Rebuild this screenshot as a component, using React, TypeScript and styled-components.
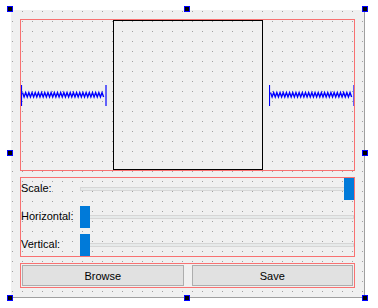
import React from "react";
import styled, { createGlobalStyle } from "styled-components";

const GlobalStyle = createGlobalStyle`
  html, body {
    margin: 0;
    padding: 0;
    background: #ffffff;
  }
  body {
    font-family: "Liberation Sans", Arial, sans-serif;
    font-size: 11px;
    color: #000000;
  }
`;

const Canvas = styled.div`
  position: relative;
  width: 378px;
  height: 308px;
  padding: 10px 0 0 11px;
  box-sizing: border-box;
`;

const Form = styled.div`
  width: 354px;
  height: 288px;
  box-sizing: border-box;
  background-color: #f0f0f0;
  background-image: conic-gradient(at 1px 1px, transparent 75%, #a0a0a0 0);
  background-size: 10px 10px;
  background-position: 1px 1px;
  border-right: 1px solid #a0a0a0;
  border-bottom: 1px solid #a0a0a0;
  padding: 9px;
  display: flex;
  flex-direction: column;
  gap: 6px;
`;

const LayoutFrame = styled.div<{ $h: number }>`
  height: ${(p) => p.$h}px;
  box-sizing: border-box;
  border: 1px solid #f87171;
`;

const TopRow = styled(LayoutFrame)`
  display: flex;
  align-items: center;
  gap: 6px;
`;

const SpacerBox = styled.div`
  flex: 1;
  height: 21px;
  display: flex;
`;

const Preview = styled.div`
  width: 150px;
  height: 150px;
  box-sizing: border-box;
  border: 1px solid #000000;
`;

const Grid = styled(LayoutFrame)`
  display: grid;
  grid-template-columns: auto 1fr;
  grid-auto-rows: 22px;
  column-gap: 6px;
  row-gap: 6px;
`;

const Label = styled.div`
  display: flex;
  align-items: center;
  white-space: nowrap;
  line-height: 13px;
  padding-bottom: 1px;
`;

const Slider = styled.div`
  position: relative;
  display: flex;
  align-items: center;
`;

const Groove = styled.div`
  flex: 1;
  height: 4px;
  box-sizing: border-box;
  background: #e7eaea;
  border: 1px solid #d6d6d6;
`;

const Thumb = styled.div<{ $at: "start" | "end" }>`
  position: absolute;
  top: 0;
  ${(p) => (p.$at === "start" ? "left: 0;" : "right: 0;")}
  width: 10px;
  height: 22px;
  background: #007ad9;
`;

const ButtonRow = styled(LayoutFrame)`
  display: flex;
  align-items: center;
  gap: 8px;
  padding: 0 1px;
`;

const Button = styled.button`
  flex: 1;
  height: 21px;
  margin: 0;
  padding: 0;
  box-sizing: border-box;
  border: 1px solid #adadad;
  background: #e1e1e1;
  font-family: "Liberation Sans", Arial, sans-serif;
  font-size: 11px;
  color: #000000;
`;

const Handle = styled.div<{ $x: number; $y: number }>`
  position: absolute;
  left: ${(p) => p.$x}px;
  top: ${(p) => p.$y}px;
  width: 6px;
  height: 6px;
  box-sizing: border-box;
  border: 1px solid #0000ff;
  background: #000000;
`;

const Spacer = () => {
  const pts: string[] = [];
  for (let x = 1.5, i = 0; x <= 84.5; x += 1.6, i++) {
    pts.push(`${x},${i % 2 === 0 ? 7.5 : 12}`);
  }
  return (
    <SpacerBox>
      <svg width="100%" height="21" preserveAspectRatio="none" viewBox="0 0 86 21">
        <line x1="0.5" y1="0" x2="0.5" y2="21" stroke="#0000ff" strokeWidth="1.2" />
        <line x1="85.5" y1="0" x2="85.5" y2="21" stroke="#0000ff" strokeWidth="1.2" />
        <polyline points={pts.join(" ")} fill="none" stroke="#0000ff" strokeWidth="1.4" />
      </svg>
    </SpacerBox>
  );
};

const handles: [number, number][] = [
  [7, 6], [184, 6], [362, 6],
  [7, 150], [362, 150],
  [7, 295], [184, 295], [362, 295],
];

const App = () => {
  return (
    <Canvas>
      <GlobalStyle />
      <Form>
        <TopRow $h={152}>
          <Spacer />
          <Preview />
          <Spacer />
        </TopRow>
        <Grid $h={80}>
          <Label>Scale:</Label>
          <Slider>
            <Groove />
            <Thumb $at="end" />
          </Slider>
          <Label>Horizontal:</Label>
          <Slider>
            <Groove />
            <Thumb $at="start" />
          </Slider>
          <Label>Vertical:</Label>
          <Slider>
            <Groove />
            <Thumb $at="start" />
          </Slider>
        </Grid>
        <ButtonRow $h={25}>
          <Button>Browse</Button>
          <Button>Save</Button>
        </ButtonRow>
      </Form>
      {handles.map(([x, y], i) => (
        <Handle key={i} $x={x} $y={y} />
      ))}
    </Canvas>
  );
};

export default App;
